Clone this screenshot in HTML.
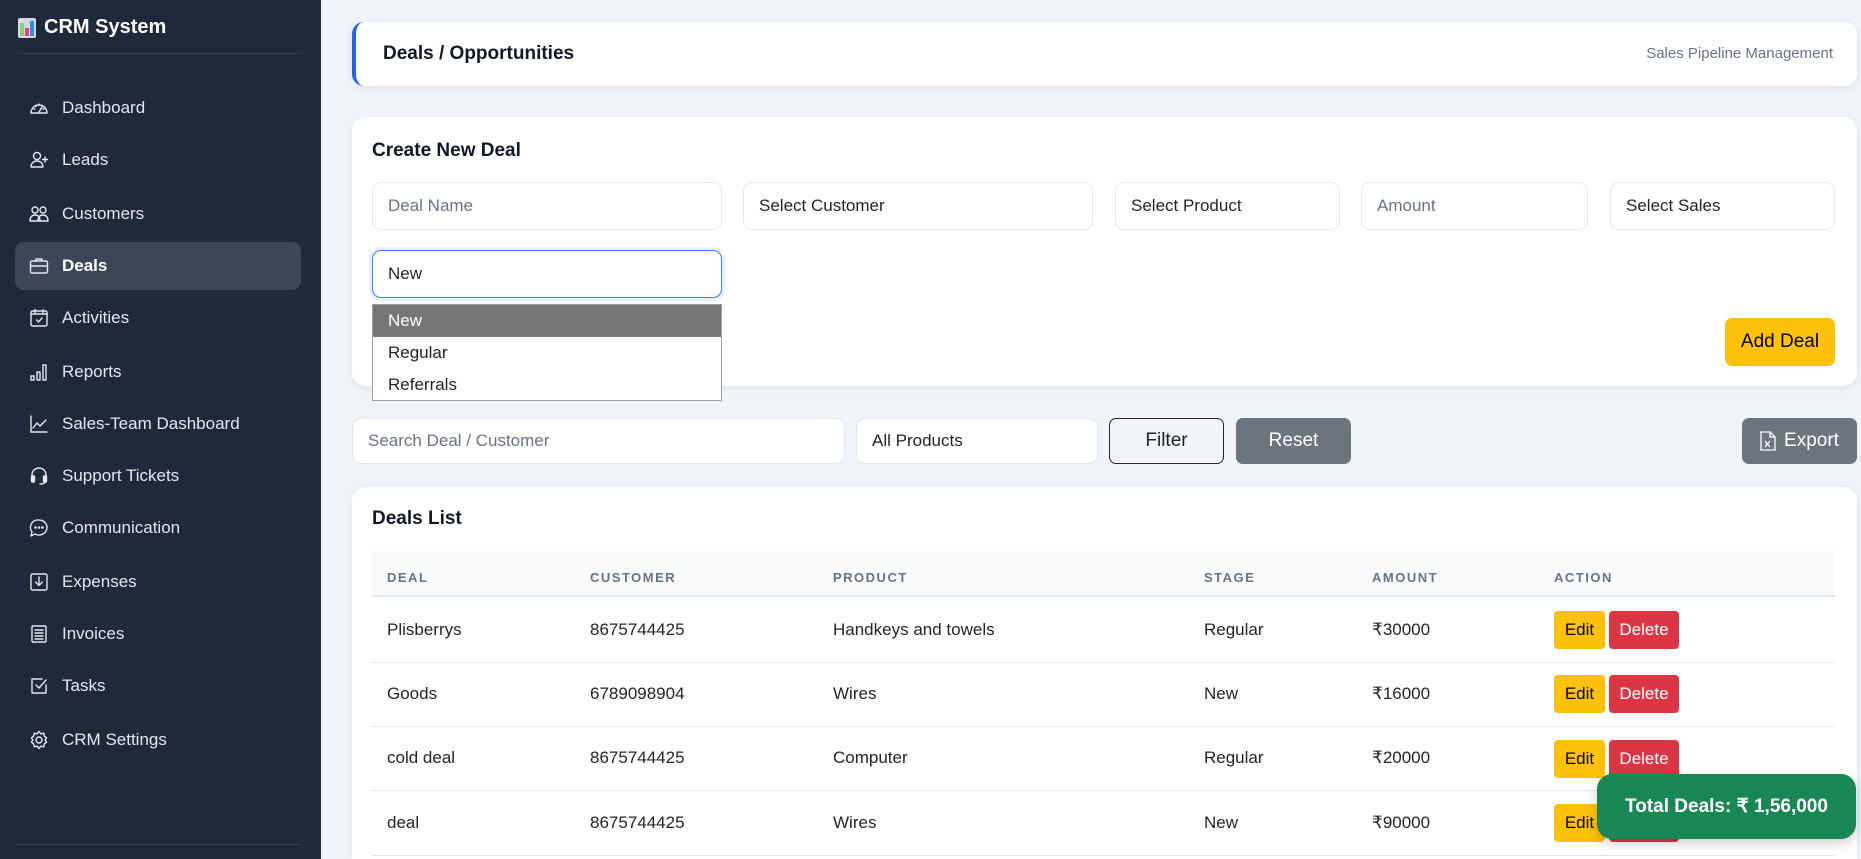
<!DOCTYPE html>
<html><head><meta charset="utf-8">
<style>
*{box-sizing:border-box;margin:0;padding:0}
html{width:1861px;height:859px;overflow:hidden}
body{width:1861px;height:859px;overflow:hidden;background:#f0f3f7;font-family:"Liberation Sans",Arial,sans-serif;color:#212529;position:relative}
.sb{position:absolute;left:0;top:0;width:321px;height:859px;background:#1e293b;color:#e2e8f0}
.logo{position:absolute;left:18px;top:16px;font-size:20px;font-weight:bold;color:#fff;display:flex;align-items:center;gap:8px}
.div{position:absolute;left:15px;right:19px;height:1px;background:#334155}
.nav{position:absolute;left:15px;width:286px;height:48px;display:flex;align-items:center;padding-left:14px;font-size:17px;color:#e2e8f0;border-radius:9px}
.nav svg{width:20px;height:20px;margin-right:13px;fill:none;stroke:#e2e8f0;stroke-width:1.4;stroke-linecap:round;stroke-linejoin:round}
.nav.act{background:#3b4758;font-weight:bold;color:#fff}
.card{position:absolute;background:#fff;border-radius:14px;box-shadow:0 2px 8px rgba(0,0,0,.07)}
.inp{position:absolute;height:48px;border:1px solid #e2e8f0;border-radius:9px;background:#fff;font-size:17px;display:flex;align-items:center;padding-left:15px;color:#212529}
.ph{color:#6b7280}
.btn{position:absolute;border-radius:7px;display:flex;align-items:center;justify-content:center;font-size:19px}
.th{position:absolute;top:570px;font-size:13px;font-weight:bold;letter-spacing:1.5px;color:#64748b}
.row{position:absolute;left:372px;width:1463px;height:1px;background:#e2e8f0}
.c{position:absolute;font-size:17px;transform:translateY(-50%)}
.e{position:absolute;width:51px;height:38px;background:#ffc107;border-radius:4px;font-size:17px;display:flex;align-items:center;justify-content:center;color:#000}
.d{position:absolute;width:70px;height:38px;background:#dc3545;border-radius:4px;font-size:17px;display:flex;align-items:center;justify-content:center;color:#fff}
</style></head><body>
<div class="sb">
 <div class="logo"><svg width="18" height="20" viewBox="0 0 18 20"><rect x="0" y="0" width="18" height="20" rx="2" fill="#d8d8e2"/><rect x="2" y="5" width="4" height="13" fill="#7ed36a"/><rect x="7" y="10" width="4" height="8" fill="#ef3e7a"/><rect x="12" y="3" width="4" height="15" fill="#2f8ff0"/></svg>CRM System</div>
 <div class="div" style="top:53px;left:18px;right:19px"></div>
 <div class="nav" style="top:84px"><svg viewBox="0 0 20 20"><path d="M2 15a8 8 0 1 1 16 0z"/><path d="M10 14l3-5"/><path d="M5 11h1M6.5 7.5l.7.7M10 6v1M14 11h1"/></svg>Dashboard</div>
 <div class="nav" style="top:136px"><svg viewBox="0 0 20 20"><circle cx="8" cy="6" r="3.5"/><path d="M2 17c0-4 3-6 6-6s6 2 6 6z"/><path d="M16 7v5M13.5 9.5h5"/></svg>Leads</div>
 <div class="nav" style="top:190px"><svg viewBox="0 0 20 20"><circle cx="6" cy="6" r="3"/><circle cx="14" cy="6" r="3"/><path d="M1 17c0-4 2-6 5-6s5 2 5 6zM9 17c0-4 2-6 5-6s5 2 5 6z"/></svg>Customers</div>
 <div class="nav act" style="top:242px"><svg viewBox="0 0 20 20"><rect x="1.5" y="5" width="17" height="12" rx="1.5"/><path d="M7 5V3h6v2M1.5 10h17"/></svg>Deals</div>
 <div class="nav" style="top:294px"><svg viewBox="0 0 20 20"><rect x="2" y="3" width="16" height="15" rx="1.5"/><path d="M2 6h16M6 1.5v3M14 1.5v3M7.5 12l2 2 3.5-4"/></svg>Activities</div>
 <div class="nav" style="top:348px"><svg viewBox="0 0 20 20"><rect x="2" y="14" width="3" height="4"/><rect x="8" y="10" width="3" height="8"/><rect x="14" y="3" width="3" height="15"/></svg>Reports</div>
 <div class="nav" style="top:400px"><svg viewBox="0 0 20 20"><path d="M2 2v16h16"/><path d="M4 14l4-5 3 3 6-6"/></svg>Sales-Team Dashboard</div>
 <div class="nav" style="top:452px"><svg viewBox="0 0 20 20"><path d="M3 13V9a7 7 0 0 1 14 0v4"/><rect x="2.5" y="10" width="3" height="6" rx="1" fill="#e2e8f0"/><rect x="14.5" y="10" width="3" height="6" rx="1" fill="#e2e8f0"/><path d="M16 16c0 2-3 2-5 2"/></svg>Support Tickets</div>
 <div class="nav" style="top:504px"><svg viewBox="0 0 20 20"><path d="M10 2a8 7.5 0 1 1-4 14l-4 2 1-4A7.5 7.5 0 0 1 10 2z"/><circle cx="6.5" cy="9.5" r=".6" fill="#e2e8f0"/><circle cx="10" cy="9.5" r=".6" fill="#e2e8f0"/><circle cx="13.5" cy="9.5" r=".6" fill="#e2e8f0"/></svg>Communication</div>
 <div class="nav" style="top:558px"><svg viewBox="0 0 20 20"><rect x="2" y="2" width="16" height="16" rx="1.5"/><path d="M10 5v8M6.5 10l3.5 3.5 3.5-3.5"/></svg>Expenses</div>
 <div class="nav" style="top:610px"><svg viewBox="0 0 20 20"><rect x="3" y="2" width="14" height="16" rx="1"/><path d="M6 6h8M6 9h8M6 12h8M6 15h8"/></svg>Invoices</div>
 <div class="nav" style="top:662px"><svg viewBox="0 0 20 20"><path d="M17 9v8H3V3h10"/><path d="M7 9l3 3 7-8"/></svg>Tasks</div>
 <div class="nav" style="top:716px"><svg viewBox="0 0 20 20"><circle cx="10" cy="10" r="3"/><path d="M10 1.5l1.8 2.3 2.9-.6.6 2.9 2.3 1.8-1.5 2.1 1.5 2.1-2.3 1.8-.6 2.9-2.9-.6L10 18.5l-1.8-2.3-2.9.6-.6-2.9-2.3-1.8L3.9 10 2.4 7.9l2.3-1.8.6-2.9 2.9.6z"/></svg>CRM Settings</div>
 <div class="div" style="top:844px"></div>
</div>

<div class="card" style="left:352px;top:22px;width:1505px;height:64px;border-left:4px solid #2563eb;border-radius:12px">
 <div style="position:absolute;left:27px;top:21px;font-size:19px;font-weight:bold;color:#111827">Deals / Opportunities</div>
 <div style="position:absolute;right:24px;top:23px;font-size:15px;color:#64748b">Sales Pipeline Management</div>
</div>

<div class="card" style="left:352px;top:117px;width:1505px;height:269px"></div>
<div style="position:absolute;left:372px;top:140px;font-size:19px;font-weight:bold;color:#111827">Create New Deal</div>
<div class="inp ph" style="left:372px;top:182px;width:350px">Deal Name</div>
<div class="inp" style="left:743px;top:182px;width:350px">Select Customer</div>
<div class="inp" style="left:1115px;top:182px;width:225px">Select Product</div>
<div class="inp ph" style="left:1361px;top:182px;width:227px">Amount</div>
<div class="inp" style="left:1610px;top:182px;width:225px">Select Sales</div>
<div class="inp" style="left:372px;top:250px;width:350px;border:1.5px solid #3b82f6;box-shadow:0 0 0 3px rgba(59,130,246,.12)">New</div>
<div style="position:absolute;left:372px;top:304px;width:350px;height:97px;background:#fff;border:1px solid #a0a0a0;font-size:17px">
 <div style="height:32px;background:#767676;color:#fff;padding-left:15px;line-height:32px">New</div>
 <div style="height:32px;padding-left:15px;line-height:32px">Regular</div>
 <div style="height:31px;padding-left:15px;line-height:31px">Referrals</div>
</div>
<div class="btn" style="left:1725px;top:318px;width:110px;height:48px;background:#ffc107;color:#000">Add Deal</div>

<div class="inp ph" style="left:352px;top:418px;width:493px;height:46px">Search Deal / Customer</div>
<div class="inp" style="left:856px;top:418px;width:242px;height:46px">All Products</div>
<div class="btn" style="left:1109px;top:418px;width:115px;height:46px;border:1px solid #212529;color:#212529">Filter</div>
<div class="btn" style="left:1236px;top:418px;width:115px;height:46px;background:#6c757d;color:#fff">Reset</div>
<div class="btn" style="left:1742px;top:418px;width:115px;height:46px;background:#6c757d;color:#fff"><svg width="16" height="20" viewBox="0 0 16 20" style="margin-right:8px" fill="none" stroke="#fff" stroke-width="1.3"><path d="M1 1h9l5 5v13H1z"/><path d="M10 1v5h5"/><path d="M5 10l5 6M10 10l-5 6"/></svg>Export</div>

<div class="card" style="left:352px;top:487px;width:1505px;height:372px;border-radius:14px 14px 0 0"></div>
<div style="position:absolute;left:372px;top:508px;font-size:19px;font-weight:bold;color:#111827">Deals List</div>
<div style="position:absolute;left:372px;top:551px;width:1463px;height:46px;background:#f8fafc;border-bottom:2px solid #e2e8f0"></div>
<div class="th" style="left:387px">DEAL</div>
<div class="th" style="left:590px">CUSTOMER</div>
<div class="th" style="left:833px">PRODUCT</div>
<div class="th" style="left:1204px">STAGE</div>
<div class="th" style="left:1372px">AMOUNT</div>
<div class="th" style="left:1554px">ACTION</div>

<div class="row" style="top:662px"></div>
<div class="row" style="top:726px"></div>
<div class="row" style="top:790px"></div>
<div class="row" style="top:855px"></div>

<div class="c" style="left:387px;top:630px">Plisberrys</div><div class="c" style="left:590px;top:630px">8675744425</div><div class="c" style="left:833px;top:630px">Handkeys and towels</div><div class="c" style="left:1204px;top:630px">Regular</div><div class="c" style="left:1372px;top:630px">₹30000</div>
<div class="e" style="left:1554px;top:611px">Edit</div><div class="d" style="left:1609px;top:611px">Delete</div>

<div class="c" style="left:387px;top:694px">Goods</div><div class="c" style="left:590px;top:694px">6789098904</div><div class="c" style="left:833px;top:694px">Wires</div><div class="c" style="left:1204px;top:694px">New</div><div class="c" style="left:1372px;top:694px">₹16000</div>
<div class="e" style="left:1554px;top:675px">Edit</div><div class="d" style="left:1609px;top:675px">Delete</div>

<div class="c" style="left:387px;top:758px">cold deal</div><div class="c" style="left:590px;top:758px">8675744425</div><div class="c" style="left:833px;top:758px">Computer</div><div class="c" style="left:1204px;top:758px">Regular</div><div class="c" style="left:1372px;top:758px">₹20000</div>
<div class="e" style="left:1554px;top:740px">Edit</div><div class="d" style="left:1609px;top:740px">Delete</div>

<div class="c" style="left:387px;top:823px">deal</div><div class="c" style="left:590px;top:823px">8675744425</div><div class="c" style="left:833px;top:823px">Wires</div><div class="c" style="left:1204px;top:823px">New</div><div class="c" style="left:1372px;top:823px">₹90000</div>
<div class="e" style="left:1554px;top:804px">Edit</div><div class="d" style="left:1609px;top:804px">Delete</div>

<div style="position:absolute;left:1597px;right:5px;top:774px;height:65px;background:#198754;border-radius:15px;color:#fff;font-size:19px;font-weight:bold;white-space:nowrap;overflow:hidden;text-align:center;line-height:65px;box-shadow:0 4px 12px rgba(0,0,0,.2)">Total Deals: ₹ 1,56,000</div>
</body></html>
